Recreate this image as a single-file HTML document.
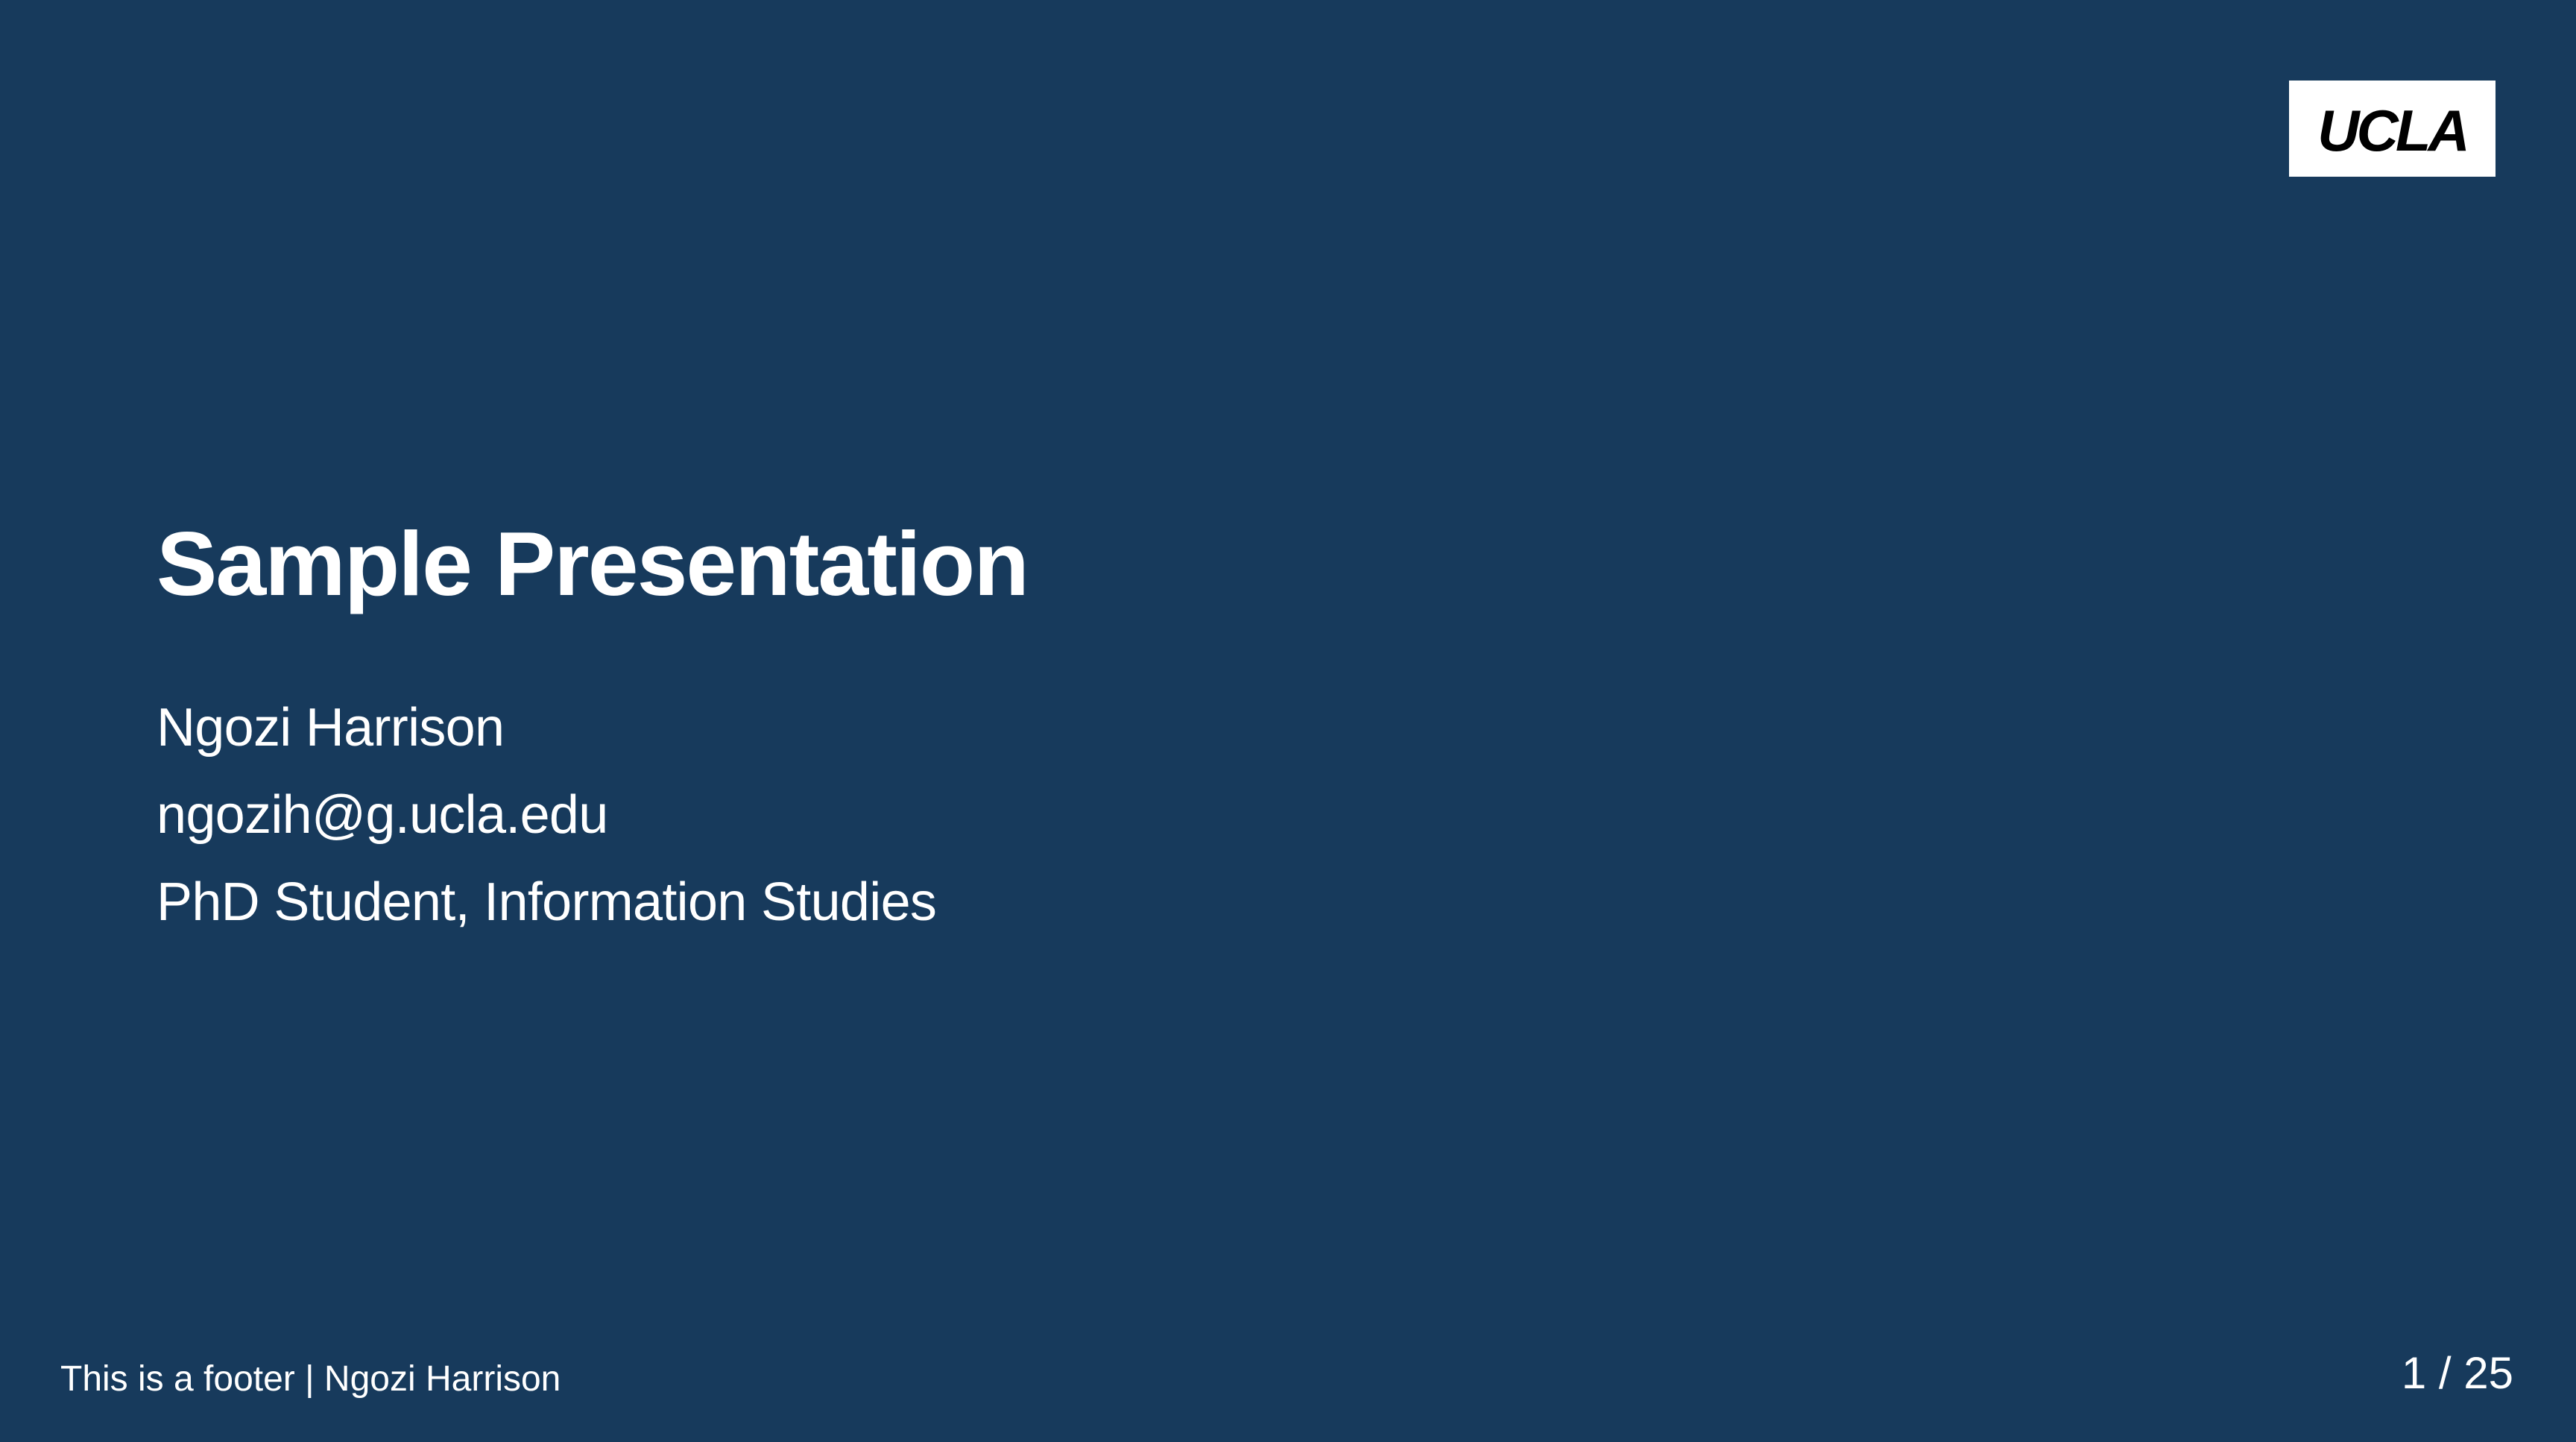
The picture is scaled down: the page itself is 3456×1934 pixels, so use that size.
<!DOCTYPE html>
<html><head><meta charset="utf-8"><style>
html,body{margin:0;padding:0}
body{width:3456px;height:1934px;background:#173a5c;position:relative;overflow:hidden;font-family:"Liberation Sans",sans-serif;color:#fff}
.a{position:absolute;line-height:1;white-space:nowrap}
.logo{position:absolute;left:3071px;top:108px;width:277px;height:129px;background:#fff}
</style></head><body>
<div class="logo"></div>
<div class="a" style="left:3071px;width:277px;text-align:center;top:136px;font-size:78px;font-weight:bold;font-style:italic;color:#000;letter-spacing:-4px">UCLA</div>
<div class="a" style="left:210px;top:695px;font-size:122px;font-weight:bold;letter-spacing:-2px">Sample Presentation</div>
<div class="a" style="left:210px;top:940px;font-size:72px;letter-spacing:-0.7px">Ngozi Harrison</div>
<div class="a" style="left:210px;top:1057px;font-size:72px;letter-spacing:-0.7px">ngozih@g.ucla.edu</div>
<div class="a" style="left:210px;top:1174px;font-size:72px;letter-spacing:-0.7px">PhD Student, Information Studies</div>
<div class="a" style="left:81px;top:1826px;font-size:48px">This is a footer | Ngozi Harrison</div>
<div class="a" style="right:84px;top:1812px;font-size:60px">1 / 25</div>
</body></html>
